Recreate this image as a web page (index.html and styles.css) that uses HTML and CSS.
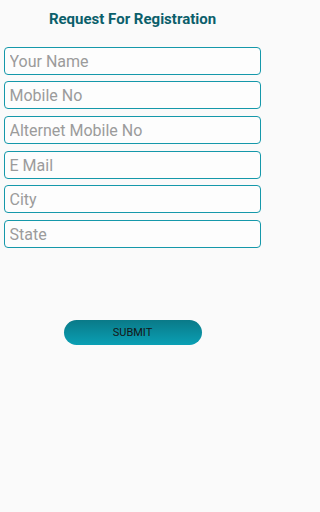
FILE: index.html
```html
<!DOCTYPE html>
<html>
<head>
<meta charset="utf-8">
<link rel="stylesheet" href="styles.css">
</head>
<body>
<div class="page">
  <h1 class="title">Request For Registration</h1>
  <form class="form">
    <input class="field" type="text" placeholder="Your Name">
    <input class="field" type="text" placeholder="Mobile No">
    <input class="field" type="text" placeholder="Alternet Mobile No">
    <input class="field" type="text" placeholder="E Mail">
    <input class="field" type="text" placeholder="City">
    <input class="field" type="text" placeholder="State">
    <div class="actions">
      <button class="submit" type="button">SUBMIT</button>
    </div>
  </form>
</div>
</body>
</html>
```

FILE: styles.css
```css
html, body {
  margin: 0;
  padding: 0;
  background: #fafafa;
  font-family: Roboto, "Liberation Sans", sans-serif;
}
.page {
  width: 265px;
  height: 512px;
  display: flex;
  flex-direction: column;
}
.title {
  margin: 0;
  padding-top: 11px;
  font-size: 15px;
  line-height: 16px;
  font-weight: 700;
  color: #0b5f6b;
  text-align: center;
}
.form {
  margin-top: 19.5px;
  padding: 0 4px;
  display: flex;
  flex-direction: column;
  gap: 6.7px;
}
.field {
  box-sizing: border-box;
  height: 28px;
  width: 100%;
  margin: 0;
  border: 1.5px solid #1598aa;
  border-radius: 4px;
  background: #fdfdfd;
  padding: 1px 4.5px 0;
  font-family: Roboto, "Liberation Sans", sans-serif;
  font-size: 16px;
  color: #333;
  outline: none;
}
.field::placeholder {
  color: #9b9b9b;
}
.actions {
  display: flex;
  justify-content: center;
  margin-top: 65.5px;
}
.submit {
  width: 138px;
  height: 25px;
  border: none;
  border-radius: 13px;
  background: linear-gradient(to bottom, #0a7a88, #0a9fb4);
  font-family: Roboto, "Liberation Sans", sans-serif;
  font-size: 11px;
  color: #151515;
  padding: 0;
}
```
